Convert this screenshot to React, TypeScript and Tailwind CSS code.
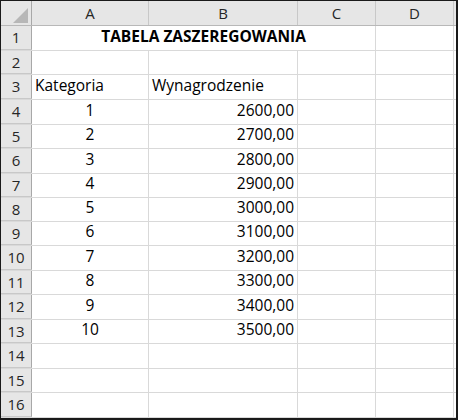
const colW = ["w-[31px]", "w-[117px]", "w-[149px]", "w-[78px]", "w-[78px]", "w-[2px]"];
const rowH = [25, 24, 25, 25, 24, 25, 24, 24, 24, 25, 24, 25, 24, 25, 24, 25];

const salaries = [
  "2600,00",
  "2700,00",
  "2800,00",
  "2900,00",
  "3000,00",
  "3100,00",
  "3200,00",
  "3300,00",
  "3400,00",
  "3500,00",
];

const hClass: Record<number, string> = {
  24: "h-[24px]",
  25: "h-[25px]",
};

const HeaderCell = ({ w, label }: { w: string; label?: string }) => (
  <div
    className={`${w} h-full shrink-0 border-r border-[#c8c8c8] bg-[#e6e6e6] flex items-center justify-center text-[15px] text-[#262626]`}
  >
    {label}
  </div>
);

const Cell = ({
  w,
  children,
  align = "left",
}: {
  w: string;
  children?: React.ReactNode;
  align?: "left" | "center" | "right";
}) => (
  <div
    className={`${w} h-full shrink-0 border-r border-[#d9d9d9] flex items-end pb-[2px] px-[3px] ${
      align === "center"
        ? "justify-center"
        : align === "right"
          ? "justify-end"
          : "justify-start"
    }`}
  >
    {children}
  </div>
);

export default function App() {
  return (
    <div
      className="w-[458px] h-[420px] bg-white border-t border-l border-r-2 border-b-2 border-[#1a1a1a] overflow-hidden text-black"
      style={{ fontFamily: '"Open Sans", "Noto Sans", sans-serif' }}
    >
      {/* column headers */}
      <div className="flex h-[25px] border-b border-[#b8b8b8]">
        <div className="w-[31px] h-full shrink-0 border-r border-[#a8a8a8] bg-[#e6e6e6] flex items-end justify-end pr-[3px] pb-[2px]">
          <svg width="15" height="15" viewBox="0 0 15 15">
            <polygon points="15,0 15,15 0,15" fill="#b7b7b7" />
          </svg>
        </div>
        <HeaderCell w={colW[1]} label="A" />
        <HeaderCell w={colW[2]} label="B" />
        <HeaderCell w={colW[3]} label="C" />
        <HeaderCell w={colW[4]} label="D" />
        <div className="w-[2px] h-full bg-[#e6e6e6]" />
      </div>

      {rowH.map((h, i) => {
        const n = i + 1;
        let a: React.ReactNode = null;
        let b: React.ReactNode = null;
        if (n === 3) {
          a = "Kategoria";
          b = "Wynagrodzenie";
        }
        if (n >= 4 && n <= 13) {
          a = String(n - 3);
          b = salaries[n - 4];
        }
        return (
          <div key={n} className={`flex ${hClass[h]} border-b border-[#d9d9d9] text-[15.5px]`}>
            <div className="w-[31px] h-full shrink-0 border-r border-[#a8a8a8] bg-[#e6e6e6] flex items-center justify-center text-[15px] text-[#262626] -mb-px border-b border-b-[#c8c8c8]">
              {n}
            </div>
            {n === 1 ? (
              <div className="w-[344px] h-full shrink-0 border-r border-[#d9d9d9] flex items-end justify-center pb-[2px] font-bold">
                TABELA ZASZEREGOWANIA
              </div>
            ) : (
              <>
                <Cell w={colW[1]} align={n === 3 ? "left" : "center"}>
                  {a}
                </Cell>
                <Cell w={colW[2]} align={n === 3 ? "left" : "right"}>
                  {b}
                </Cell>
                <Cell w={colW[3]} />
              </>
            )}
            <Cell w={colW[4]} />
            <div className="w-[2px] h-full" />
          </div>
        );
      })}
    </div>
  );
}
